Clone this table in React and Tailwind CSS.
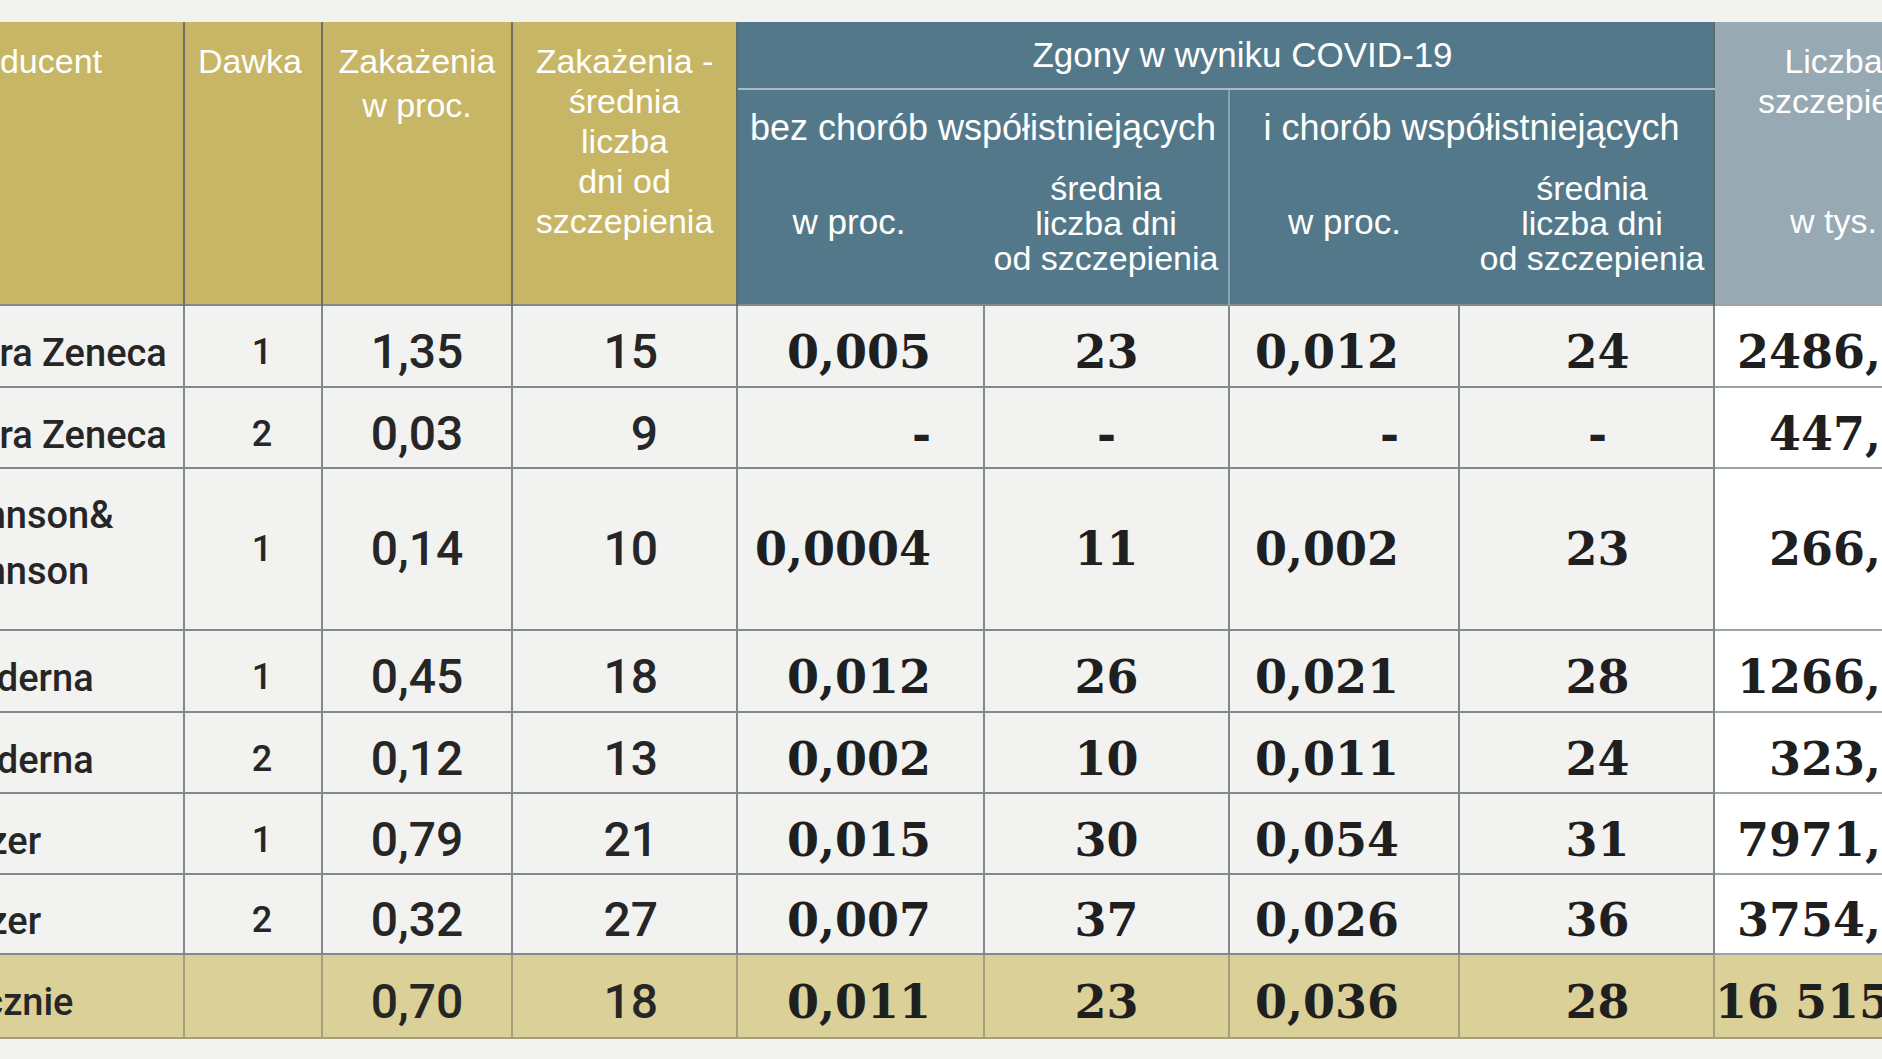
import React from 'react'

const rows = [
  { name: 'Astra Zeneca', dose: '1', inf: '1,35', days: '15', d1: '0,005', d2: '23', d3: '0,012', d4: '24', total: '2486,9', h: 'h-[82px]' },
  { name: 'Astra Zeneca', dose: '2', inf: '0,03', days: '9', d1: '-', d2: '-', d3: '-', d4: '-', total: '447,6', h: 'h-[81px]' },
  { name: 'Johnson&', name2: 'Johnson', dose: '1', inf: '0,14', days: '10', d1: '0,0004', d2: '11', d3: '0,002', d4: '23', total: '266,0', h: 'h-[162px]', tall: true },
  { name: 'Moderna', dose: '1', inf: '0,45', days: '18', d1: '0,012', d2: '26', d3: '0,021', d4: '28', total: '1266,4', h: 'h-[82px]' },
  { name: 'Moderna', dose: '2', inf: '0,12', days: '13', d1: '0,002', d2: '10', d3: '0,011', d4: '24', total: '323,8', h: 'h-[81px]' },
  { name: 'Pfizer', dose: '1', inf: '0,79', days: '21', d1: '0,015', d2: '30', d3: '0,054', d4: '31', total: '7971,3', h: 'h-[81px]' },
  { name: 'Pfizer', dose: '2', inf: '0,32', days: '27', d1: '0,007', d2: '37', d3: '0,026', d4: '36', total: '3754,0', h: 'h-[80px]' },
]

const line = 'border-2 border-[#7f8a90]'
const serif = "font-['DejaVu_Serif',serif] font-bold text-[46px] leading-[48px]"
const sans = "font-['Roboto','Liberation_Sans',sans-serif] font-medium text-[#262626]"

function Row({ r }) {
  const pt = r.tall ? '' : 'pt-[12px]'
  return (
    <tr className={r.h}>
      <td className={`${line} border-l-0 pl-[12px] text-left text-[38px] leading-[56px] ${sans} ${r.tall ? 'pb-[12px]' : 'pt-[14px]'}`}>
        {r.name}
        {r.name2 && <br />}
        {r.name2}
      </td>
      <td className={`${line} ${pt} text-center pl-[18px] text-[36px] leading-[40px] ${sans}`}>{r.dose}</td>
      <td className={`${line} ${pt} text-center text-[48px] leading-[48px] ${sans}`}>{r.inf}</td>
      <td className={`${line} ${pt} text-right pr-[78px] text-[48px] leading-[48px] ${sans}`}>{r.days}</td>
      <td className={`${line} ${pt} ${serif} text-right pr-[52px] text-[#1f1f1f]`}>{r.d1}</td>
      <td className={`${line} ${pt} ${serif} text-center text-[#1f1f1f]`}>{r.d2}</td>
      <td className={`${line} ${pt} ${serif} text-right pr-[59px] text-[#1f1f1f]`}>{r.d3}</td>
      <td className={`${line} ${pt} ${serif} text-center pl-[22px] text-[#1f1f1f]`}>{r.d4}</td>
      <td className={`border-2 border-[#9aa4a9] border-l-[#7f8a90] bg-white ${pt} ${serif} text-right pr-[38px] whitespace-nowrap text-[#1f1f1f]`}>{r.total}</td>
    </tr>
  )
}

export default function App() {
  const gold = 'bg-[#c7b665] border-r-2 border-[#6f6f62] align-top font-normal text-white text-[34px] leading-[40px]'
  const teal = 'bg-[#537889] font-normal text-white text-[34px]'
  const tot = 'bg-[#dbd098] border-2 border-[#a39f78] pt-[12px]'

  return (
    <div className="w-[1882px] h-[1059px] overflow-hidden bg-[#f2f2f0] pt-[22px] font-['Liberation_Sans',Arial,sans-serif]">
      <table className="ml-[-70px] w-[2022px] table-fixed border-collapse">
        <colgroup>
          <col className="w-[254px]" />
          <col className="w-[138px]" />
          <col className="w-[190px]" />
          <col className="w-[225px]" />
          <col className="w-[247px]" />
          <col className="w-[245px]" />
          <col className="w-[230px]" />
          <col className="w-[255px]" />
          <col className="w-[238px]" />
        </colgroup>
        <thead>
          <tr className="h-[67px]">
            <th rowSpan={3} className={`${gold} text-left pl-[17px] pt-[19px]`}>Producent</th>
            <th rowSpan={3} className={`${gold} text-center pt-[19px] pr-[6px]`}>Dawka</th>
            <th rowSpan={3} className={`${gold} text-center pt-[17px] !leading-[44px]`}>
              Zakażenia<br />w proc.
            </th>
            <th rowSpan={3} className={`${gold} text-center pt-[19px] border-r-[#5d6b70]`}>
              Zakażenia -<br />średnia<br />liczba<br />dni od<br />szczepienia
            </th>
            <th colSpan={4} className={`${teal} border-b-2 border-[#a9bcc6] text-center align-middle pl-[34px] text-[35px] leading-[40px]`}>
              Zgony w wyniku COVID-19
            </th>
            <th rowSpan={3} className="bg-[#97a9b2] border-l-2 border-[#5d6b70] align-top pt-[19px] font-normal text-white text-[34px] leading-[40px] text-center">
              <div className="flex flex-col items-center">
                <span>Liczba</span>
                <span>szczepień</span>
                <span className="mt-[83px] leading-[35px]">w tys.</span>
              </div>
            </th>
          </tr>
          <tr className="h-[70px]">
            <th colSpan={2} className={`${teal} border-r-2 border-[#8aa3b0] align-top pt-[18px] !text-[36px] leading-[40px] text-center whitespace-nowrap`}>
              bez chorób współistniejących
            </th>
            <th colSpan={2} className={`${teal} align-top pt-[18px] !text-[36px] leading-[40px] text-center whitespace-nowrap`}>
              i chorób współistniejących
            </th>
          </tr>
          <tr className="h-[146px]">
            <th className={`${teal} align-top pt-[45px] pr-[24px] !text-[35px] leading-[35px] text-center`}>w proc.</th>
            <th className={`${teal} border-r-2 border-[#8aa3b0] align-top pt-[12px] leading-[35px] text-center`}>
              średnia<br />liczba dni<br />od szczepienia
            </th>
            <th className={`${teal} align-top pt-[45px] !text-[35px] leading-[35px] text-center`}>w proc.</th>
            <th className={`${teal} align-top pt-[12px] pl-[12px] leading-[35px] text-center`}>
              średnia<br />liczba dni<br />od szczepienia
            </th>
          </tr>
        </thead>
        <tbody className="bg-[#f2f2f0]">
          {rows.map((r, i) => (
            <Row key={i} r={r} />
          ))}
          <tr className="h-[84px]">
            <td className={`${tot} border-l-0 pl-[12px] text-left text-[38px] leading-[48px] ${sans}`}>Łącznie</td>
            <td className={tot}></td>
            <td className={`${tot} text-center text-[48px] leading-[48px] ${sans}`}>0,70</td>
            <td className={`${tot} text-right pr-[78px] text-[48px] leading-[48px] ${sans}`}>18</td>
            <td className={`${tot} ${serif} text-right pr-[52px] text-[#1f1f1f]`}>0,011</td>
            <td className={`${tot} ${serif} text-center text-[#1f1f1f]`}>23</td>
            <td className={`${tot} ${serif} text-right pr-[59px] text-[#1f1f1f]`}>0,036</td>
            <td className={`${tot} ${serif} text-center pl-[22px] text-[#1f1f1f]`}>28</td>
            <td className={`${tot} ${serif} text-right pr-[38px] whitespace-nowrap text-[#1f1f1f]`}>16 515,2</td>
          </tr>
        </tbody>
      </table>
    </div>
  )
}
